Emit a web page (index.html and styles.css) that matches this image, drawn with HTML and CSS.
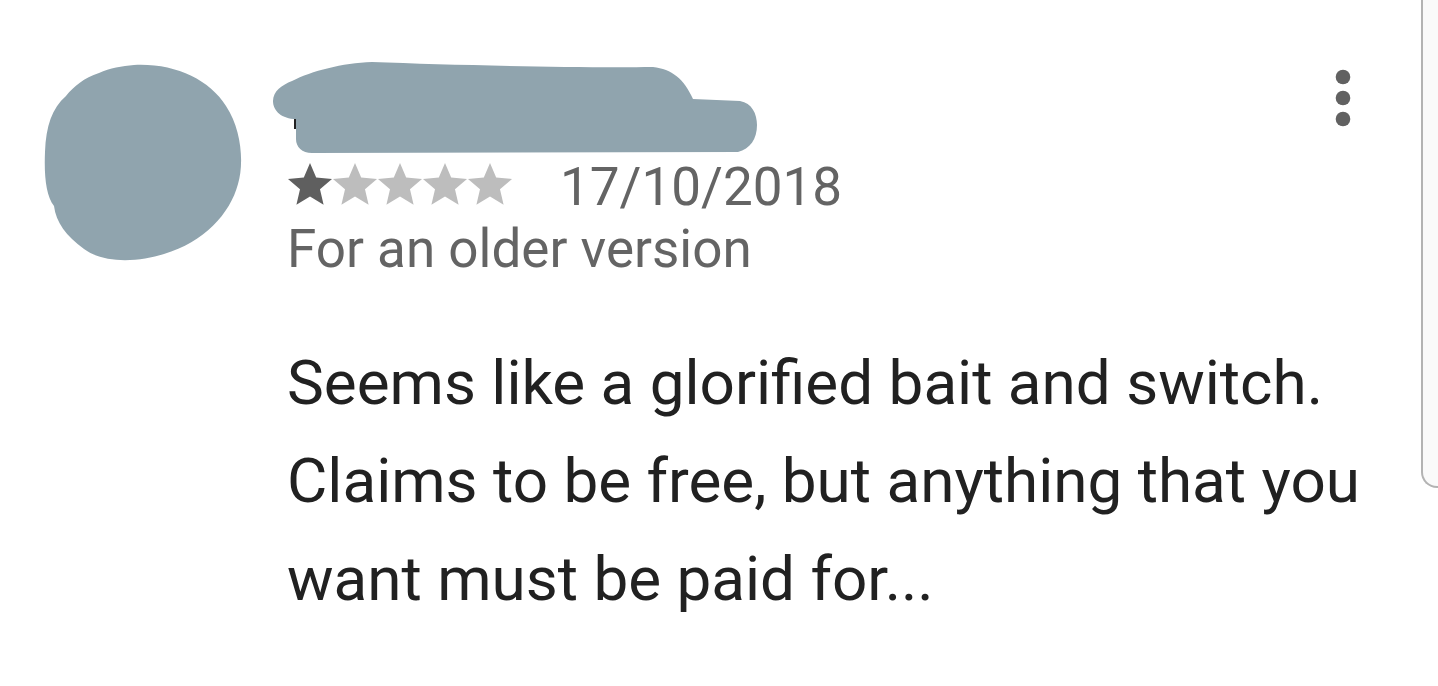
FILE: index.html
```html
<!DOCTYPE html>
<html lang="en">
<head>
<meta charset="utf-8">
<title>Review</title>
<link rel="stylesheet" href="styles.css">
</head>
<body>
<div class="review">
  <div class="avatar">
    <svg viewBox="0 0 200 200" width="200" height="200" aria-hidden="true">
      <path d="M90,1 C130,-1 165,15 182,42 C198,66 200,100 194,120 C186,150 160,178 120,190 C95,198 60,200 40,185 C22,172 12,158 10,142 C2,132 0,112 1,88 C2,62 8,44 22,32 C30,22 40,14 55,9 C66,4 78,2 90,1 Z" fill="#90a4ae"/>
    </svg>
  </div>
  <div class="content">
    <div class="head">
      <div class="info">
        <div class="name">
          <span class="name-text">l</span>
          <svg class="redact" viewBox="0 0 486 96" width="486" height="96" aria-hidden="true">
            <path d="M20,22 C40,12 70,4 100,3 C180,6 300,9 381,8 C400,10 412,20 421,40 L468,42 C480,44 485,55 485,66 C485,80 478,90 466,93 L40,94 C30,94 24,88 24,80 L24,60 C10,60 1,52 1,42 C1,32 10,26 20,22 Z" fill="#90a4ae"/>
          </svg>
        </div>
        <div class="meta">
          <svg class="stars" viewBox="0 0 225 42" width="225" height="42" aria-label="1 of 5 stars">
            <defs>
              <path id="star" d="M12 17.27L18.18 21l-1.64-7.03L22 9.24l-7.19-.61L12 2 9.19 8.63 2 9.24l5.46 4.73L5.82 21z"/>
            </defs>
            <g transform="translate(-3.4,-4.4) scale(2.2)"><use href="#star" fill="#5f5f5f"/></g>
            <g transform="translate(41.6,-4.4) scale(2.2)"><use href="#star" fill="#bdbdbd"/></g>
            <g transform="translate(86.6,-4.4) scale(2.2)"><use href="#star" fill="#bdbdbd"/></g>
            <g transform="translate(131.6,-4.4) scale(2.2)"><use href="#star" fill="#bdbdbd"/></g>
            <g transform="translate(176.6,-4.4) scale(2.2)"><use href="#star" fill="#bdbdbd"/></g>
          </svg><span class="date">17/10/2018</span>
        </div>
        <div class="version">For an older version</div>
      </div>
      <button class="more" aria-label="More options">
        <svg viewBox="0 0 16 58" width="16" height="58" aria-hidden="true">
          <circle cx="8" cy="8" r="7.3" fill="#616161"/>
          <circle cx="8" cy="29" r="7.3" fill="#616161"/>
          <circle cx="8" cy="50" r="7.3" fill="#616161"/>
        </svg>
      </button>
    </div>
    <p class="text">Seems like a glorified bait and switch. Claims to be free, but anything that you want must be paid for...</p>
  </div>
</div>
<div class="edge"></div>
</body>
</html>
```

FILE: styles.css
```css
html, body {
  margin: 0;
  padding: 0;
  background: #ffffff;
  height: 100%;
  overflow: hidden;
}

body {
  font-family: Roboto, "Noto Sans", sans-serif;
  position: relative;
}

.review {
  display: flex;
  align-items: flex-start;
  padding: 56px 38px 0 44px;
  gap: 43px;
}

.avatar {
  flex: 0 0 200px;
  height: 200px;
  margin-top: 8px;
}

.avatar svg {
  display: block;
}

.content {
  flex: 1;
  min-width: 0;
}

.head {
  display: flex;
  align-items: flex-start;
  justify-content: space-between;
}

.info {
  flex: 1;
}

.name {
  position: relative;
  height: 101px;
}

.name-text {
  display: block;
  padding-top: 26px;
  padding-left: 3px;
  font-size: 52px;
  line-height: 60px;
  color: #212121;
}

.redact {
  position: absolute;
  left: -15px;
  top: 3px;
}

.meta {
  font-size: 53px;
  line-height: 60px;
  color: #646464;
  white-space: nowrap;
}

.stars {
  vertical-align: baseline;
  margin-right: 48px;
}

.version {
  margin-top: 2px;
  font-size: 53px;
  line-height: 60px;
  color: #646464;
}

.more {
  margin: 13px 49px 0 0;
  padding: 0;
  border: 0;
  background: none;
  width: 16px;
  height: 58px;
}

.more svg {
  display: block;
}

.text {
  margin: 55px 0 0;
  font-size: 62px;
  line-height: 98px;
  color: #212121;
}

.edge {
  position: absolute;
  left: 1421px;
  top: -20px;
  width: 40px;
  height: 506px;
  background: #fafafa;
  border-left: 2px solid #b3b3b3;
  border-bottom: 2px solid #b3b3b3;
  border-bottom-left-radius: 16px;
}
```
